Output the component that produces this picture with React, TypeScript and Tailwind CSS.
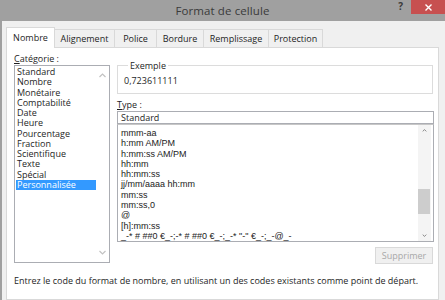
import React from 'react';

const categories = [
  'Standard',
  'Nombre',
  'Monétaire',
  'Comptabilité',
  'Date',
  'Heure',
  'Pourcentage',
  'Fraction',
  'Scientifique',
  'Texte',
  'Spécial',
  'Personnalisée',
];

const formats = [
  'mmm-aa',
  'h:mm AM/PM',
  'h:mm:ss AM/PM',
  'hh:mm',
  'hh:mm:ss',
  'jj/mm/aaaa hh:mm',
  'mm:ss',
  'mm:ss,0',
  '@',
  '[h]:mm:ss',
  '_-* # ##0 €_-;-* # ##0 €_-;_-* "-" €_-;_-@_-',
];

const tabs = [
  { label: 'Nombre', w: 'w-[49px]' },
  { label: 'Alignement', w: 'w-[61px]' },
  { label: 'Police', w: 'w-[43px]' },
  { label: 'Bordure', w: 'w-[48px]' },
  { label: 'Remplissage', w: 'w-[66px]' },
  { label: 'Protection', w: 'w-[55px]' },
];

function Chevron({ up, color }: { up?: boolean; color: string }) {
  return (
    <svg width="7" height="5" viewBox="0 0 7 5" className="block">
      <polyline
        points={up ? '0.5,4 3.5,1 6.5,4' : '0.5,1 3.5,4 6.5,1'}
        fill="none"
        stroke={color}
        strokeWidth="1.2"
      />
    </svg>
  );
}

export default function App() {
  return (
    <div className="w-[445px] h-[300px] overflow-hidden bg-[#a0a0a0] flex flex-col font-['Open_Sans',sans-serif] text-[9px] text-[#1e1e1e]">
      {/* title bar */}
      <div className="h-[21px] flex shrink-0">
        <div className="flex-1" />
        <div className="text-[11.5px] text-[#3a3a3a] leading-[21px] tracking-[0.1px]">Format de cellule</div>
        <div className="flex-1 flex justify-end items-start">
          <span className="text-[10px] font-bold text-[#3a3a3a] leading-[13px] mr-[8px]">?</span>
          <div className="w-[34px] h-[14px] bg-[#c75050] flex items-center justify-center">
            <svg width="7" height="7" viewBox="0 0 7 7">
              <path d="M0.5 0.5 L6.5 6.5 M6.5 0.5 L0.5 6.5" stroke="#fff" strokeWidth="1.4" />
            </svg>
          </div>
        </div>
      </div>

      {/* dialog body */}
      <div className="flex-1 ml-[2px] bg-[#f0f0f0] pt-[5px] pl-[4px] flex flex-col">
        <div className="flex items-end h-[21px]">
          {tabs.map((t, i) => (
            <div
              key={t.label}
              className={
                i === 0
                  ? `${t.w} h-[21px] bg-white border border-[#d9d9d9] border-b-0 flex items-center justify-center relative z-10 -mb-px`
                  : `${t.w} h-[18px] bg-[#f0f0f0] border border-[#d9d9d9] border-b-0 -ml-px flex items-center justify-center`
              }
            >
              {t.label}
            </div>
          ))}
        </div>

        <div className="w-[433px] flex-1 bg-white border border-[#d9d9d9] pl-[7px] pt-[4px] flex flex-col">
          <div className="flex gap-[7px]">
            {/* categories */}
            <div className="w-[96px] flex flex-col">
              <div className="h-[13px] leading-[13px]">
                <span className="underline">C</span>atégorie :
              </div>
              <div className="h-[198px] border border-[#abadb3] flex pt-[1px] pl-px">
                <div className="w-[80px] flex flex-col">
                  {categories.map((c, i) => (
                    <div
                      key={c}
                      className={
                        i === categories.length - 1
                          ? 'h-[10.25px] leading-[10.25px] pl-px bg-[#3399ff] text-white'
                          : 'h-[10.25px] leading-[10.25px] pl-px'
                      }
                    >
                      {c}
                    </div>
                  ))}
                </div>
                <div className="flex-1 flex flex-col justify-between items-center pt-[6px] pb-[7px]">
                  <Chevron up color="#c2c2c2" />
                  <Chevron color="#c2c2c2" />
                </div>
              </div>
            </div>

            {/* right side */}
            <div className="w-[317px] flex flex-col pt-[8px]">
              <fieldset className="w-[316px] h-[34px] border border-[#dcdcdc] pl-[6px]">
                <legend className="ml-[4px] px-[2px] leading-[11px]">Exemple</legend>
                <div className="mt-[4px] leading-[11px]">0,723611111</div>
              </fieldset>
              <div className="mt-[4px] h-[13px] leading-[13px]">
                <span className="underline">T</span>ype :
              </div>
              <div className="h-[13px] border border-[#abadb3] leading-[11px] pl-[3px]">Standard</div>
              <div className="h-[118px] border border-[#abadb3] border-t-[#c7c7c7] flex overflow-hidden">
                <div className="flex-1 flex flex-col pt-[3px] pl-[3px] font-['Liberation_Sans',sans-serif] text-[9px] text-[#222]">
                  {formats.map((f) => (
                    <div key={f} className="h-[10.3px] leading-[10.3px] whitespace-pre">
                      {f}
                    </div>
                  ))}
                </div>
                <div className="w-[13px] mr-[2px] bg-[#f4f4f4] flex flex-col items-center pt-[4px] pb-[4px]">
                  <Chevron up color="#606060" />
                  <div className="flex-1 w-full flex flex-col pt-[57px] pb-[20px]">
                    <div className="w-[12px] h-[25px] bg-[#cdcdcd]" />
                  </div>
                  <Chevron color="#606060" />
                </div>
              </div>
              <div className="flex justify-end mt-[5px] pr-px">
                <div className="w-[58px] h-[17px] bg-[#f0f0f0] border border-[#d9d9d9] text-[#a8a8a8] flex items-center justify-center">
                  Supprimer
                </div>
              </div>
            </div>
          </div>
          <div className="mt-[11px] leading-[12px]">
            Entrez le code du format de nombre, en utilisant un des codes existants comme point de départ.
          </div>
        </div>
      </div>
    </div>
  );
}
